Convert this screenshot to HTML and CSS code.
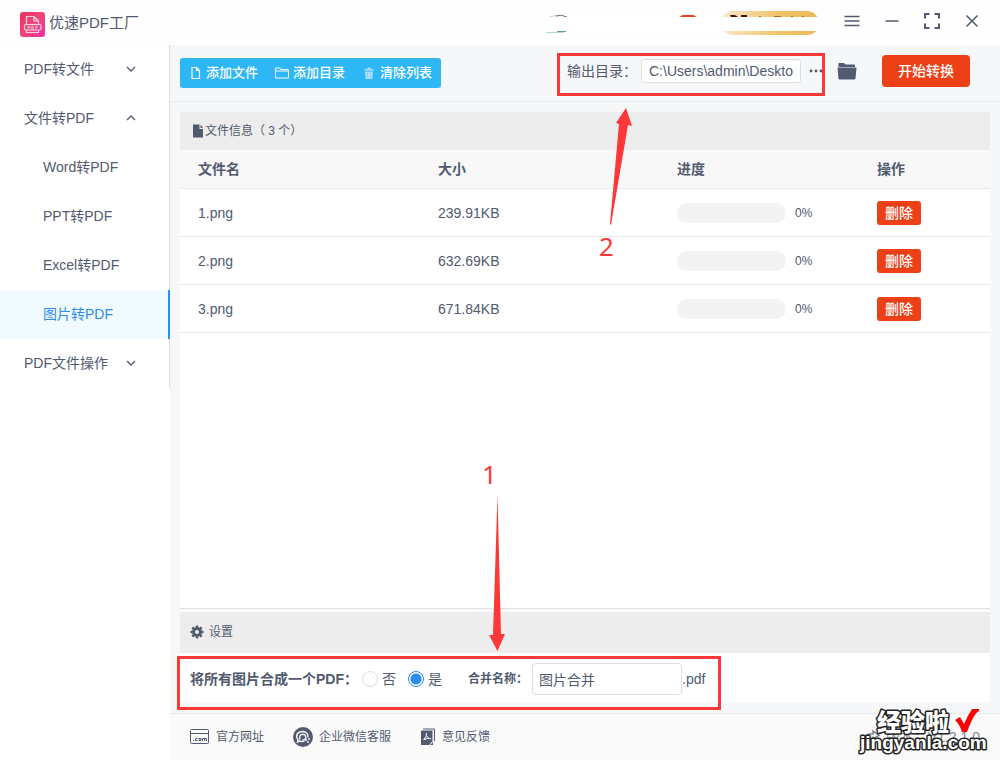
FILE: index.html
```
<!DOCTYPE html>
<html lang="zh-CN">
<head>
<meta charset="utf-8">
<meta name="viewport" content="width=device-width, initial-scale=1">
<title>优速PDF工厂</title>
<link rel="stylesheet" href="styles.css">
</head>
<body>
<div class="app">
  <header class="titlebar">
    <svg class="logo" width="26" height="26" viewBox="0 0 26 26" aria-hidden="true">
      <defs><linearGradient id="lg" x1="0" y1="0" x2="1" y2="1"><stop offset="0" stop-color="#e8305c"/><stop offset=".5" stop-color="#f0487a"/><stop offset="1" stop-color="#ee2fa6"/></linearGradient></defs>
      <rect width="25" height="25" rx="3" fill="url(#lg)"/>
      <g fill="none" stroke="#fbd3e0" stroke-width="1.2"><path d="M6.500 12V4.500h7.500l4.500 4.500v3M14 4.500V9h4.500M6.500 18v2.500h12V18"/><rect x="4.500" y="12.500" width="16.500" height="5.500" rx="1.500"/><path d="M8 17v-2.800h1.800v1.500H8M11.800 14.200V17h1.200q.8-1.400 0-2.800zM15.800 17v-2.800h2M15.800 15.700h1.500" stroke-width=".8"/></g>
    </svg>
    <h1 class="app-name">优速PDF工厂</h1>
    <svg class="account" width="276" height="32" viewBox="0 0 276 32" aria-hidden="true">
      <defs><linearGradient id="gold"><stop offset="0" stop-color="#fae8cd"/><stop offset=".6" stop-color="#efc365"/><stop offset="1" stop-color="#edb956"/></linearGradient></defs>
      <path d="M6 9.500l8-1" stroke="#c9cdd2" fill="none"/><path d="M12 9q5-2 11 1" stroke="#67717e" fill="none"/>
      <path d="M2 23.500h20" stroke="#b8d4d6"/><path d="M13 24.500h9" stroke="#5f9da1"/><path d="M2 25.500h18" stroke="#b8d4d6"/>
      <path d="M136 10q1-2 3-2h10q2 0 3 2z" fill="#ee4016"/>
      <rect x="177" y="4" width="98" height="24" rx="12" fill="url(#gold)"/>
      <path d="M186 8h5l3 2h-7zM197 8h6v2h-6z" fill="#4a1008"/>
      <path d="M215 9.500h2M230 9.500h7M247 9.500h2M258 9.500h2" stroke="#98722c"/>
      <path d="M0 10h276v14H0z" fill="#fff"/>
    </svg>
    <div class="window-controls">
      <button aria-label="菜单"><svg width="18" height="18" viewBox="0 0 18 18"><path d="M1.500 4.500h15M1.500 9h15M1.500 13.500h15"/></svg></button>
      <button aria-label="最小化"><svg width="18" height="18" viewBox="0 0 18 18"><path d="M2.500 9h13"/></svg></button>
      <button aria-label="最大化"><svg width="18" height="18" viewBox="0 0 18 18"><path d="M2 6.500V2h4.500M11.500 2H16v4.500M16 11.500V16h-4.500M6.500 16H2v-4.500" stroke-width="2"/></svg></button>
      <button aria-label="关闭"><svg width="18" height="18" viewBox="0 0 18 18"><path d="M3.500 3.500l11 11M14.500 3.500l-11 11"/></svg></button>
    </div>
  </header>

  <div class="body">
    <aside class="sidebar">
      <nav class="nav">
        <button class="nav-group" aria-expanded="false">PDF转文件<svg class="chev" width="10" height="6" viewBox="0 0 10 6"><path d="M1 1l4 4 4-4"/></svg></button>
        <button class="nav-group" aria-expanded="true">文件转PDF<svg class="chev" width="10" height="6" viewBox="0 0 10 6"><path d="M1 5l4-4 4 4"/></svg></button>
        <a class="nav-item" href="#word">Word转PDF</a>
        <a class="nav-item" href="#ppt">PPT转PDF</a>
        <a class="nav-item" href="#excel">Excel转PDF</a>
        <a class="nav-item active" href="#image" aria-current="page">图片转PDF</a>
        <button class="nav-group" aria-expanded="false">PDF文件操作<svg class="chev" width="10" height="6" viewBox="0 0 10 6"><path d="M1 1l4 4 4-4"/></svg></button>
      </nav>
    </aside>

    <div class="main">
      <div class="toolbar">
        <div class="actions">
          <button><svg width="13" height="14" viewBox="0 0 13 14"><path d="M3 1.500h4.500l3 3v8H3zM7.500 1.500v3h3" fill="none" stroke="currentColor" stroke-width="1.200"/></svg>添加文件</button>
          <button><svg width="14" height="14" viewBox="0 0 14 14"><path d="M.5 12V2h4.500l1 1.500h7.500V12zM.5 5h13" fill="none" stroke="currentColor"/></svg>添加目录</button>
          <button><svg width="14" height="14" viewBox="0 0 14 14"><path d="M2.500 3h3V1.500h3V3h3v1.500h-9zM3 5.500h8l-.7 7.500H3.700z" fill="#a9dffb"/><path d="M5.500 6.500v5M8.500 6.500v5" stroke="#84d3f9"/></svg>清除列表</button>
        </div>
        <div class="output">
          <label for="out">输出目录：</label>
          <input id="out" class="out-input" type="text" value="C:\Users\admin\Desktop">
          <button class="more" aria-label="更多"><svg width="16" height="16" viewBox="0 0 16 16" fill="#515a6e"><circle cx="3" cy="8" r="1.400"/><circle cx="8" cy="8" r="1.400"/><circle cx="13" cy="8" r="1.400"/></svg></button>
          <button class="folder" aria-label="打开目录"><svg width="20" height="18" viewBox="0 0 20 18" fill="#515a6e"><path d="M1.500 5V1.500Q1.500 1 2 1h5l1.500 1.500H17q1 0 1 1V5z"/><path d="M.5 5.500h19l-1 11q-.1 1-1 1h-15q-.9 0-1-1z"/></svg></button>
          <button class="start">开始转换</button>
        </div>
      </div>

      <main class="content">
        <section class="files">
          <h2 class="bar file-bar"><svg width="12" height="14" viewBox="0 0 12 14"><path d="M1 .5h6.500V5H11v8.500H1zM8.500.5L11 4H8.500z" fill="#515a6e"/></svg>文件信息（ 3 个）</h2>
          <table class="file-table">
            <colgroup><col class="c-name"><col class="c-size"><col class="c-progress"><col></colgroup>
            <thead><tr><th>文件名</th><th>大小</th><th>进度</th><th>操作</th></tr></thead>
            <tbody>
              <tr><td>1.png</td><td>239.91KB</td><td><div class="progress"><span class="track"></span>0%</div></td><td><button class="delete">删除</button></td></tr>
              <tr><td>2.png</td><td>632.69KB</td><td><div class="progress"><span class="track"></span>0%</div></td><td><button class="delete">删除</button></td></tr>
              <tr><td>3.png</td><td>671.84KB</td><td><div class="progress"><span class="track"></span>0%</div></td><td><button class="delete">删除</button></td></tr>
            </tbody>
          </table>
        </section>
        <section class="settings">
          <h2 class="bar set-bar"><svg width="14" height="14" viewBox="0 0 14 14"><circle cx="7" cy="7" r="3.500" fill="none" stroke="#515a6e" stroke-width="3"/><path d="M7 .5v2M7 11.500v2M.5 7h2M11.500 7h2M2.300 2.300l1.500 1.500M10.200 10.200l1.500 1.500M11.700 2.300l-1.500 1.500M3.800 10.200l-1.500 1.500" stroke="#515a6e" stroke-width="2.400"/></svg>设置</h2>
          <form class="set-body">
            <fieldset class="merge">
              <legend class="set-label merge-label">将所有图片合成一个PDF：</legend>
              <label class="radio"><input type="radio" name="merge">否</label>
              <label class="radio"><input type="radio" name="merge" checked>是</label>
            </fieldset>
            <label class="set-label name-label" for="merged">合并名称：</label>
            <input id="merged" class="name-input" type="text" value="图片合并">
            <span class="ext">.pdf</span>
          </form>
        </section>
      </main>

      <footer class="footer">
        <a href="#site"><svg width="20" height="16" viewBox="0 0 20 16" fill="none" stroke="#515a6e"><rect x=".5" y=".5" width="18" height="14" rx="1"/><path d="M.5 4.500h18M3.500 11v1M7.500 9.500H5.500v2h2M9 9.500h2v2H9zM12.500 12V9.500h4V12M14.500 9.500V12"/></svg>官方网址</a>
        <a href="#wechat"><svg width="20" height="20" viewBox="0 0 20 20"><circle cx="10" cy="10" r="10" fill="#515a6e"/><g fill="none" stroke="#f4f5f6" stroke-width="1.400"><path d="M11.500 14.200Q9 15 6.500 14l-2 1 .4-2.500C1.800 8.500 5 4.500 9.500 4.500c4 0 6 3 5.500 6"/><path d="M7 12.500q-1.500-4.500 2.500-5.200 3.500 0 3.300 3.700-1 2.500-3.500 2"/></g><circle cx="13" cy="13" r="1.100" fill="#f4f5f6"/><circle cx="16" cy="12" r="1" fill="#f4f5f6"/><circle cx="15" cy="15" r="1" fill="#f4f5f6"/></svg>企业微信客服</a>
        <a href="#feedback"><svg width="16" height="18" viewBox="0 0 16 18"><path d="M3 1h11.500v12" fill="none" stroke="#515a6e"/><path d="M1 2.500h11.500V13L9 17H1z" fill="#515a6e"/><path d="M6.500 5q.8 3-3 7M6.800 8q1.200 2.500 4 3M4 11.500q3-1.500 6.500-1" fill="none" stroke="#fff"/><path d="M10 17l3-3v3z" fill="#515a6e"/></svg>意见反馈</a>
        <span class="version"><svg width="16" height="14" viewBox="0 0 16 14"><path d="M2 12V7q0-3 4-3h3V1l6 4.500L9 9V6.500" fill="none" stroke="#7b8394" stroke-width="1.500"/></svg>版本：V1.2.1.0</span>
      </footer>
    </div>
  </div>

  <svg class="notes" width="1000" height="760" viewBox="0 0 1000 760" aria-hidden="true">
    <g fill="none" stroke="#fd3838" stroke-width="3"><rect x="558.500" y="54.500" width="265" height="40"/><rect x="178.500" y="657.500" width="541" height="51"/></g>
    <g fill="#fd3838">
      <path d="M626 108l6 18-4-1-17 100-1-1 9-100-3-1z"/>
      <path d="M497.500 495l3.500 139h4l-7.500 17-8.500-16h4z"/>
      <text class="note-number" x="599" y="256">2</text>
      <text class="note-number" x="482" y="484">1</text>
    </g>
    <g class="mark">
      <text class="mark-cn" x="877" y="731">经验啦</text>
      <text class="mark-en" x="860" y="749">jingyanla.com</text>
      <path d="M955 720l5-3 4 7q4-9 8-15h7v2q-5 2-12 21h-5q-2-7-7-12z" fill="#f00"/>
    </g>
  </svg>
</div>
</body>
</html>
```
FILE: styles.css
```
* { box-sizing: border-box; }
body {
  margin: 0;
  font: 14px/20px "Liberation Sans", "Noto Sans CJK SC", sans-serif;
  color: #515a6e;
}
button, input { font: inherit; color: inherit; margin: 0; }
button { border: 0; padding: 0; background: none; cursor: pointer; }
a { color: inherit; text-decoration: none; }
h1, h2 { margin: 0; font-weight: 400; }
svg { flex: none; }

.app { position: relative; min-height: 100vh; display: flex; flex-direction: column; background: #fff; overflow: hidden; }
.titlebar { display: flex; align-items: center; height: 45px; padding: 0 19px 0 20px; background: #fefefe; }
.logo { margin-top: 4px; }
.app-name { margin-left: 3px; font-size: 15px; }
.account { margin-left: auto; }
.window-controls { display: flex; gap: 22px; margin-left: 23px; padding-bottom: 3px; }
.window-controls svg { display: block; fill: none; stroke: #515a6e; stroke-width: 1.5; }

.body { flex: 1; display: flex; }
.sidebar { flex: 0 0 170px; }
.nav { display: flex; flex-direction: column; border-right: 1px solid #dcdee2; }
.nav-group { display: flex; align-items: center; justify-content: space-between; height: 49px; padding: 0 33px 1px 24px; }
.nav-item { height: 49px; padding-left: 43px; line-height: 49px; }
.nav-item.active { margin-right: -1px; color: #2d8cf0; background: #f0faff; border-right: 2px solid #2d8cf0; }
.chev { fill: none; stroke: #515a6e; stroke-width: 1.3; }

.main { flex: 1; min-width: 0; display: flex; flex-direction: column; background: #f6f7f9; }
.toolbar { display: flex; justify-content: space-between; align-items: center; height: 57px; padding: 0 30px 4px 10px; border-bottom: 1px solid #e8eaec; }
.actions { display: flex; gap: 17px; height: 30px; margin-top: 3px; padding: 0 9px; border-radius: 3px; background: #2db7f5; color: #fff; font-size: 13px; font-weight: 500; }
.actions button { display: flex; align-items: center; gap: 4px; white-space: nowrap; }
.output { display: flex; align-items: center; white-space: nowrap; }
.out-input { width: 160px; height: 24px; padding: 0 7px; border: 1px solid #dcdee2; border-radius: 3px; background: #fff; margin-left: 4px; }
.more { margin-left: 7px; }
.folder { margin-left: 13px; }
.more svg, .folder svg { display: block; }
.start { width: 88px; height: 32px; margin-left: 25px; border-radius: 4px; background: #ee4016; color: #fff; font-weight: 500; }

.content { flex: 1; display: flex; flex-direction: column; padding: 10px 10px 11px; }
.files { flex: 1; background: #fff; border-bottom: 1px solid #dcdee2; }
.bar { display: flex; align-items: center; background: #ededed; font-size: 12px; }
.file-bar { height: 38px; padding-left: 12px; gap: 1px; }
.file-table { width: 100%; table-layout: fixed; border-collapse: separate; border-spacing: 0; }
.c-name { width: 240px; }
.c-size { width: 239px; }
.c-progress { width: 200px; }
.file-table th, .file-table td { height: 48px; padding: 0 0 0 18px; text-align: left; border-bottom: 1px solid #e8eaec; }
.file-table th { height: 39px; background: #f8f8f9; font-weight: 700; }
.progress { display: flex; align-items: center; gap: 9px; font-size: 12px; }
.track { width: 109px; height: 20px; border-radius: 10px; background: #f3f3f3; }
.delete { display: block; width: 44px; height: 24px; border-radius: 3px; background: #ee4016; color: #fff; font-weight: 500; }

.settings { padding-top: 3px; background: #fff; }
.set-bar { height: 41px; padding: 0 10px 1px; gap: 5px; }
.set-body { display: flex; align-items: center; height: 49px; padding: 2px 0 0 10px; }
.merge { display: flex; align-items: center; margin: 0; padding: 0; border: 0; }
.set-label { font-weight: 700; white-space: nowrap; }
.merge-label { float: left; padding: 0; margin-right: 4px; }
.radio { display: flex; align-items: center; gap: 4px; margin-right: 12px; }
.radio input { appearance: none; width: 16px; height: 16px; border: 1px solid #dcdee2; border-radius: 50%; background: #fff; }
.radio input:checked { border-color: #2d8cf0; background: radial-gradient(circle, #2d8cf0 5px, #fff 6px); }
.name-label { margin-left: 14px; font-size: 12px; }
.name-input { width: 150px; height: 32px; margin-left: 4px; padding: 0 6px; border: 1px solid #dcdee2; border-radius: 4px; background: #fff; }

.footer { display: flex; align-items: center; gap: 29px; height: 47px; padding: 0 20px; border-top: 1px solid #e8eaec; background: #fafafa; font-size: 12px; }
.footer a { display: flex; align-items: center; gap: 5px; }
.footer a svg { margin-right: 1px; }
.version { display: flex; align-items: center; gap: 6px; margin-left: auto; font-size: 14px; color: #808695; }

.notes { position: absolute; top: 0; left: 0; pointer-events: none; }
.note-number { font: 26px "Noto Sans", sans-serif; }
.mark { paint-order: stroke; stroke-linejoin: round; }
.mark text { paint-order: stroke; fill: #fff; stroke: #222; stroke-width: 3px; }
.mark-cn { font: 900 24px "Noto Sans CJK SC", sans-serif; }
.mark-en { font: 700 19px "Liberation Sans", sans-serif; }
```
